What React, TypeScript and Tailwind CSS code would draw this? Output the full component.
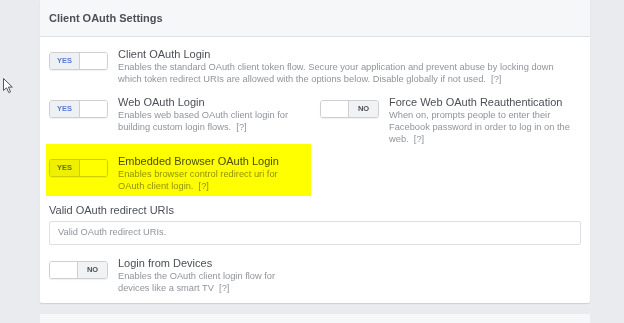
import React from 'react';

type ToggleProps = { on: boolean };

const Toggle = ({ on }: ToggleProps) => (
  <div className="flex h-[18px] w-[59px] shrink-0 overflow-hidden rounded-[3px] border border-[#ccd0d5] bg-white shadow-[0_1px_1px_rgba(0,0,0,0.06)]">
    {on ? (
      <>
        <div className="flex w-[30px] items-center justify-center border-r border-[#ccd0d5] bg-[#eef0f3] text-[7.5px] font-bold text-[#5b7bd5]">
          YES
        </div>
        <div className="flex-1 bg-white" />
      </>
    ) : (
      <>
        <div className="flex-1 bg-white" />
        <div className="flex w-[30px] items-center justify-center border-l border-[#ccd0d5] bg-[#f1f2f4] text-[7.5px] font-bold text-[#4b4f56]">
          NO
        </div>
      </>
    )}
  </div>
);

type SettingProps = {
  on: boolean;
  title: string;
  desc: string;
};

const Setting = ({ on, title, desc }: SettingProps) => (
  <div className="flex">
    <div className="mt-[5px]">
      <Toggle on={on} />
    </div>
    <div className="ml-[10px]">
      <div className="whitespace-nowrap text-[11px] leading-[14px] text-[#4b4f56]">{title}</div>
      <div className="text-[9.3px] leading-[12px] text-[#90949c]">
        {desc + '\u00a0 [?]'}
      </div>
    </div>
  </div>
);

const Cursor = () => (
  <svg
    className="absolute left-[2px] top-[77px]"
    width="12"
    height="17"
    viewBox="0 0 12 17"
  >
    <path
      d="M1.5 1.5 L1.5 13.5 L4.5 10.8 L6.8 15.6 L8.6 14.8 L6.4 10.1 L10.3 10.1 Z"
      fill="#ffffff"
      stroke="#555"
      strokeWidth="1"
      strokeLinejoin="round"
    />
  </svg>
);

export default function App() {
  return (
    <div
      className="relative h-[323px] w-[624px] overflow-hidden bg-[#e9ebee]"
      style={{ fontFamily: '"Liberation Sans", Arial, sans-serif' }}
    >
      <Cursor />
      <div className="ml-[40px] w-[550px]">
        <div className="overflow-hidden rounded-b-[2px] bg-white shadow-[0_1px_1px_rgba(0,0,0,0.12)]">
          <div className="flex h-[37px] items-center border-b border-[#dddfe2] bg-[#f6f7f9] px-[9px]">
            <span className="text-[11px] font-bold text-[#4b4f56]">Client OAuth Settings</span>
          </div>
          <div className="px-[9px] pb-[9px] pt-[10px]">
            <div className="w-[520px]">
              <Setting
                on
                title="Client OAuth Login"
                desc="Enables the standard OAuth client token flow. Secure your application and prevent abuse by locking down which token redirect URIs are allowed with the options below. Disable globally if not used."
              />
            </div>
            <div className="mt-[10px] grid grid-cols-[261px_261px] gap-x-[10px]">
              <div className="w-[245px]">
                <Setting
                  on
                  title="Web OAuth Login"
                  desc="Enables web based OAuth client login for building custom login flows."
                />
              </div>
              <div className="w-[258px]">
                <Setting
                  on={false}
                  title="Force Web OAuth Reauthentication"
                  desc="When on, prompts people to enter their Facebook password in order to log in on the web."
                />
              </div>
              <div className="relative mt-[9px] w-[245px]">
                <div className="absolute -bottom-[4px] -left-[3px] -top-[10px] w-[265px] bg-[#ffff00] mix-blend-multiply" />
                <Setting
                  on
                  title="Embedded Browser OAuth Login"
                  desc="Enables browser control redirect uri for OAuth client login."
                />
              </div>
            </div>
            <div className="mt-[11px] text-[11px] leading-[14px] text-[#4b4f56]">
              Valid OAuth redirect URIs
            </div>
            <div className="mt-[4px] flex h-[24px] w-[532px] items-center rounded-[2px] border border-[#dddfe2] px-[8px] text-[9.3px] text-[#90949c]">
              Valid OAuth redirect URIs.
            </div>
            <div className="mt-[11px] w-[245px]">
              <Setting
                on={false}
                title="Login from Devices"
                desc="Enables the OAuth client login flow for devices like a smart TV"
              />
            </div>
          </div>
        </div>
        <div className="mt-[11px] h-[20px] bg-[#f6f7f9]" />
      </div>
    </div>
  );
}
